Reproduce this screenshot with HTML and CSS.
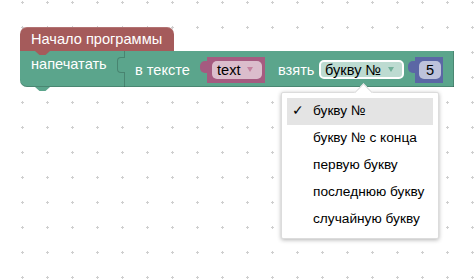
FILE: index.html
```html
<!DOCTYPE html>
<html lang="ru">

<head>
    <meta charset="UTF-8">
    <title>Blockly</title>
    <link rel="stylesheet" href="styles.css">
</head>

<body>
    <div class="workspace">
        <svg class="grid" width="474" height="279">
            <defs>
                <pattern id="dots" width="25" height="25" patternUnits="userSpaceOnUse">
                    <rect x="21" y="2" width="3" height="1" fill="#cfcfcf"></rect>
                    <rect x="22" y="1" width="1" height="3" fill="#cfcfcf"></rect>
                </pattern>
            </defs>
            <rect width="474" height="279" fill="url(#dots)"></rect>
        </svg>

        <div class="stack">
            <div class="hat">Начало программы</div>
            <div class="print">
                <div class="print-label">напечатать</div>
                <div class="substr">
                    <span class="label label-in">в тексте</span>
                    <div class="var-block">
                        <span class="field field-var">text <i class="arrow"></i></span>
                    </div>
                    <span class="label label-take">взять</span>
                    <span class="field field-drop">букву № <i class="arrow"></i></span>
                    <div class="num-block">
                        <span class="field field-num">5</span>
                    </div>
                </div>
            </div>
        </div>

        <div class="menu">
            <div class="item active"><span class="check">✓</span>букву №</div>
            <div class="item">букву № с конца</div>
            <div class="item">первую букву</div>
            <div class="item">последнюю букву</div>
            <div class="item">случайную букву</div>
        </div>
    </div>
</body>

</html>
```

FILE: styles.css
```css
body {
    margin: 0;
    padding: 0;
    background: #fff;
    font-family: 'Liberation Sans', Arial, sans-serif;
}

.workspace {
    position: relative;
    width: 474px;
    height: 279px;
    overflow: hidden;
}

.grid {
    position: absolute;
    left: 0;
    top: 0;
}

/* blocks */
.stack {
    position: absolute;
    left: 20px;
    top: 27px;
}

.hat {
    position: relative;
    display: inline-block;
    background-color: #a55b5b;
    color: #fff;
    font-size: 14.6px;
    line-height: 24px;
    height: 24px;
    padding: 0 12px 0 11px;
    border-radius: 7px 7px 0 0;
    box-shadow: inset 0 1px 0 rgba(255, 255, 255, 0.15);
}

.hat::after {
    content: '';
    position: absolute;
    left: 15px;
    bottom: -4px;
    width: 15px;
    height: 4px;
    background-color: #a55b5b;
    clip-path: polygon(0 0, 100% 0, 70% 100%, 30% 100%);
    z-index: 2;
}

.print {
    position: relative;
    display: flex;
    background-color: #5ba58c;
    height: 36px;
    width: 434px;
    border-radius: 0 0 0 7px;
    box-shadow: inset 0 -1px 0 rgba(0, 0, 0, 0.18), inset -1px 0 0 rgba(0, 0, 0, 0.18);
}

.print::after {
    content: '';
    position: absolute;
    left: 15px;
    bottom: -4px;
    width: 15px;
    height: 4px;
    background-color: #5ba58c;
    clip-path: polygon(0 0, 100% 0, 70% 100%, 30% 100%);
}

.print-label {
    width: 104px;
    box-sizing: border-box;
    padding: 4px 0 0 11px;
    color: #fff;
    font-size: 14.6px;
    line-height: 18px;
}

.substr {
    position: relative;
    flex: 1;
    display: flex;
    align-items: center;
    padding: 1px 0 0 10px;
    border-left: 1px solid rgba(0, 0, 0, 0.2);
}

.substr::before {
    content: '';
    position: absolute;
    left: -8px;
    top: 6px;
    width: 7px;
    height: 14px;
    background-color: #5ba58c;
    border: 1px solid rgba(0, 0, 0, 0.2);
    border-right: none;
    border-radius: 4px 0 0 4px;
}

.label {
    color: #fff;
    font-size: 14.6px;
    line-height: 18px;
    white-space: nowrap;
}

.label-in {
    width: 57px;
}

.label-take {
    width: 35px;
    margin: 0 6px 0 13px;
}

.var-block,
.num-block {
    position: relative;
    display: flex;
    height: 18px;
}

.var-block {
    background-color: #a55b80;
    margin-left: 15px;
    padding: 4px 3px 4px 5px;
}

.num-block {
    background-color: #5b67a5;
    margin-left: 11px;
    padding: 4px 2px 4px 4px;
}

.var-block::before,
.num-block::before {
    content: '';
    position: absolute;
    left: -7px;
    top: 4px;
    width: 8px;
    height: 12px;
    border-radius: 5px 0 0 5px;
    background-color: inherit;
}

.field {
    display: flex;
    align-items: center;
    height: 18px;
    box-sizing: border-box;
    padding: 0 5px;
    border-radius: 5px;
    color: #000;
    font-size: 14.6px;
}

.field-var {
    background-color: #dbbdcc;
    width: 50px;
    justify-content: space-between;
    padding: 0 9px 0 5px;
}

.field-drop {
    background-color: #bddbd1;
    border: 2px solid #fff;
    height: 19px;
    width: 85px;
    justify-content: space-between;
    padding: 0 8px 0 4px;
}

.field-num {
    background-color: #bdc2db;
    width: 22px;
    justify-content: center;
}

.arrow {
    display: inline-block;
    width: 0;
    height: 0;
    border-left: 3.5px solid transparent;
    border-right: 3.5px solid transparent;
    border-top: 5px solid #c4829f;
}

.field-drop .arrow {
    border-top-color: #72b09a;
}

/* dropdown */
.menu {
    position: absolute;
    left: 281px;
    top: 92px;
    width: 158px;
    box-sizing: border-box;
    padding: 5px;
    background: #fff;
    border: 1px solid #dcdcdc;
    border-radius: 2px;
    box-shadow: 0 1px 4px rgba(0, 0, 0, 0.3);
}

.menu::before {
    content: '';
    position: absolute;
    left: 75px;
    top: -7px;
    width: 12px;
    height: 12px;
    background: #fff;
    border-top: 1px solid #dcdcdc;
    border-left: 1px solid #dcdcdc;
    transform: rotate(45deg);
}

.item {
    position: relative;
    height: 27px;
    line-height: 26px;
    padding-left: 26px;
    font-size: 13.7px;
    color: #000;
}

.item.active {
    background-color: #e4e4e4;
}

.check {
    position: absolute;
    left: 5px;
}
```
